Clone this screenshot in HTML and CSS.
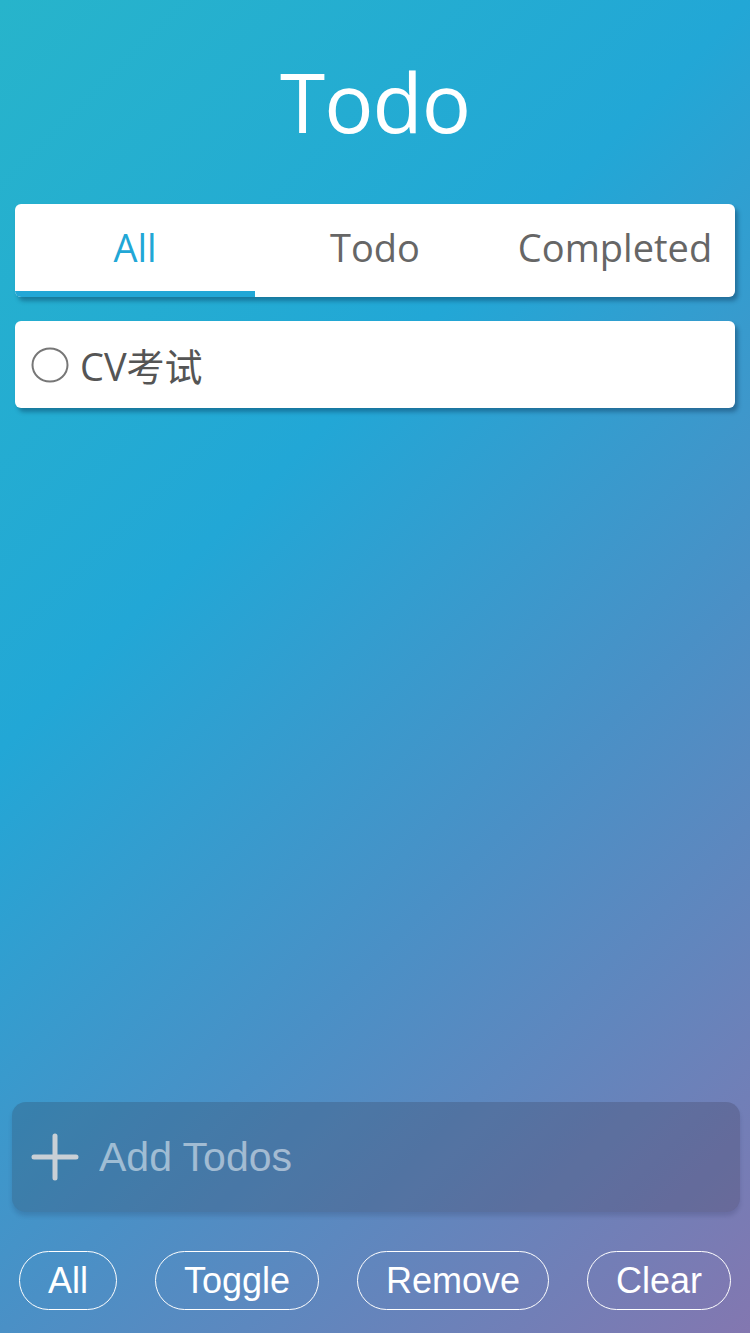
FILE: index.html
```html
<!DOCTYPE html>
<html lang="en">
<head>
<meta charset="utf-8">
<title>Todo</title>
<link rel="stylesheet" href="styles.css">
</head>
<body>
<div class="app">
  <h1 class="title">Todo</h1>
  <nav class="tabs">
    <div class="tab active">All</div>
    <div class="tab">Todo</div>
    <div class="tab">Completed</div>
  </nav>
  <ul class="list">
    <li class="item">
      <svg class="check" viewBox="0 0 38 36" width="38" height="36"><ellipse cx="19" cy="18" rx="17.5" ry="16.5" fill="none" stroke="#777" stroke-width="2"/></svg>
      <span class="item-text">CV考试</span>
    </li>
  </ul>
  <div class="add">
    <svg class="plus" viewBox="0 0 48 48" width="48" height="48"><path d="M24 3 V45 M3 24 H45" stroke="#c9d0d6" stroke-width="5" stroke-linecap="round" fill="none"/></svg>
    <input class="add-input" type="text" placeholder="Add Todos">
  </div>
  <div class="actions">
    <button class="btn">All</button>
    <button class="btn">Toggle</button>
    <button class="btn">Remove</button>
    <button class="btn">Clear</button>
  </div>
</div>
</body>
</html>
```
FILE: styles.css
```css
html, body {
  margin: 0;
  padding: 0;
  height: 100%;
}
body {
  background: linear-gradient(135deg, #27b4cb 0%, #22a7d6 36%, #4a90c6 64%, #8377b0 100%);
  font-family: "Open Sans", "Noto Sans CJK SC", sans-serif;
}
.app {
  display: flex;
  flex-direction: column;
  height: 100vh;
  box-sizing: border-box;
  padding-bottom: 23px;
}
.title {
  margin: 0;
  height: 204px;
  box-sizing: border-box;
  padding-top: 51px;
  font-size: 82px;
  line-height: 100px;
  font-weight: 400;
  color: #fff;
  text-align: center;
  letter-spacing: -1px;
}
.tabs {
  margin: 0 15px;
  display: grid;
  grid-template-columns: repeat(3, 1fr);
  background: #fff;
  border-radius: 6px;
  overflow: hidden;
  box-shadow: 3px 4px 4px rgba(0, 30, 60, 0.35);
}
.tab {
  font-size: 38px;
  line-height: 87px;
  text-align: center;
  color: #666;
  border-bottom: 6px solid transparent;
}
.tab.active {
  color: #22a7d6;
  border-bottom-color: #22a7d6;
}
.list {
  list-style: none;
  margin: 24px 0 0;
  padding: 0;
  flex: 1;
}
.item {
  margin: 0 15px;
  height: 87px;
  background: #fff;
  border-radius: 6px;
  box-shadow: 3px 4px 4px rgba(0, 30, 60, 0.35);
  display: flex;
  align-items: center;
  padding-left: 16px;
  gap: 11px;
}
.check {
  display: block;
  flex: none;
}
.item-text {
  font-size: 38px;
  color: #555;
}
.add {
  margin: 0 10px 0 12px;
  height: 110px;
  border-radius: 14px;
  background: rgba(40, 35, 50, 0.2);
  box-shadow: 0 4px 4px rgba(20, 30, 60, 0.15);
  display: flex;
  align-items: center;
  padding-left: 19px;
  gap: 20px;
}
.plus {
  display: block;
  flex: none;
}
.add-input {
  flex: 1;
  min-width: 0;
  background: transparent;
  border: none;
  outline: none;
  padding: 0;
  font-family: "Liberation Sans", Arial, sans-serif;
  font-size: 41px;
  color: #fff;
}
.add-input::placeholder {
  color: rgba(255, 255, 255, 0.5);
}
.actions {
  margin: 39px 19px 0;
  display: flex;
  justify-content: space-between;
}
.btn {
  height: 59px;
  padding: 0 28px;
  background: transparent;
  border: 1.5px solid #fff;
  border-radius: 30px;
  color: #fff;
  font-family: "Liberation Sans", Arial, sans-serif;
  font-size: 36px;
  line-height: 1;
}
```
